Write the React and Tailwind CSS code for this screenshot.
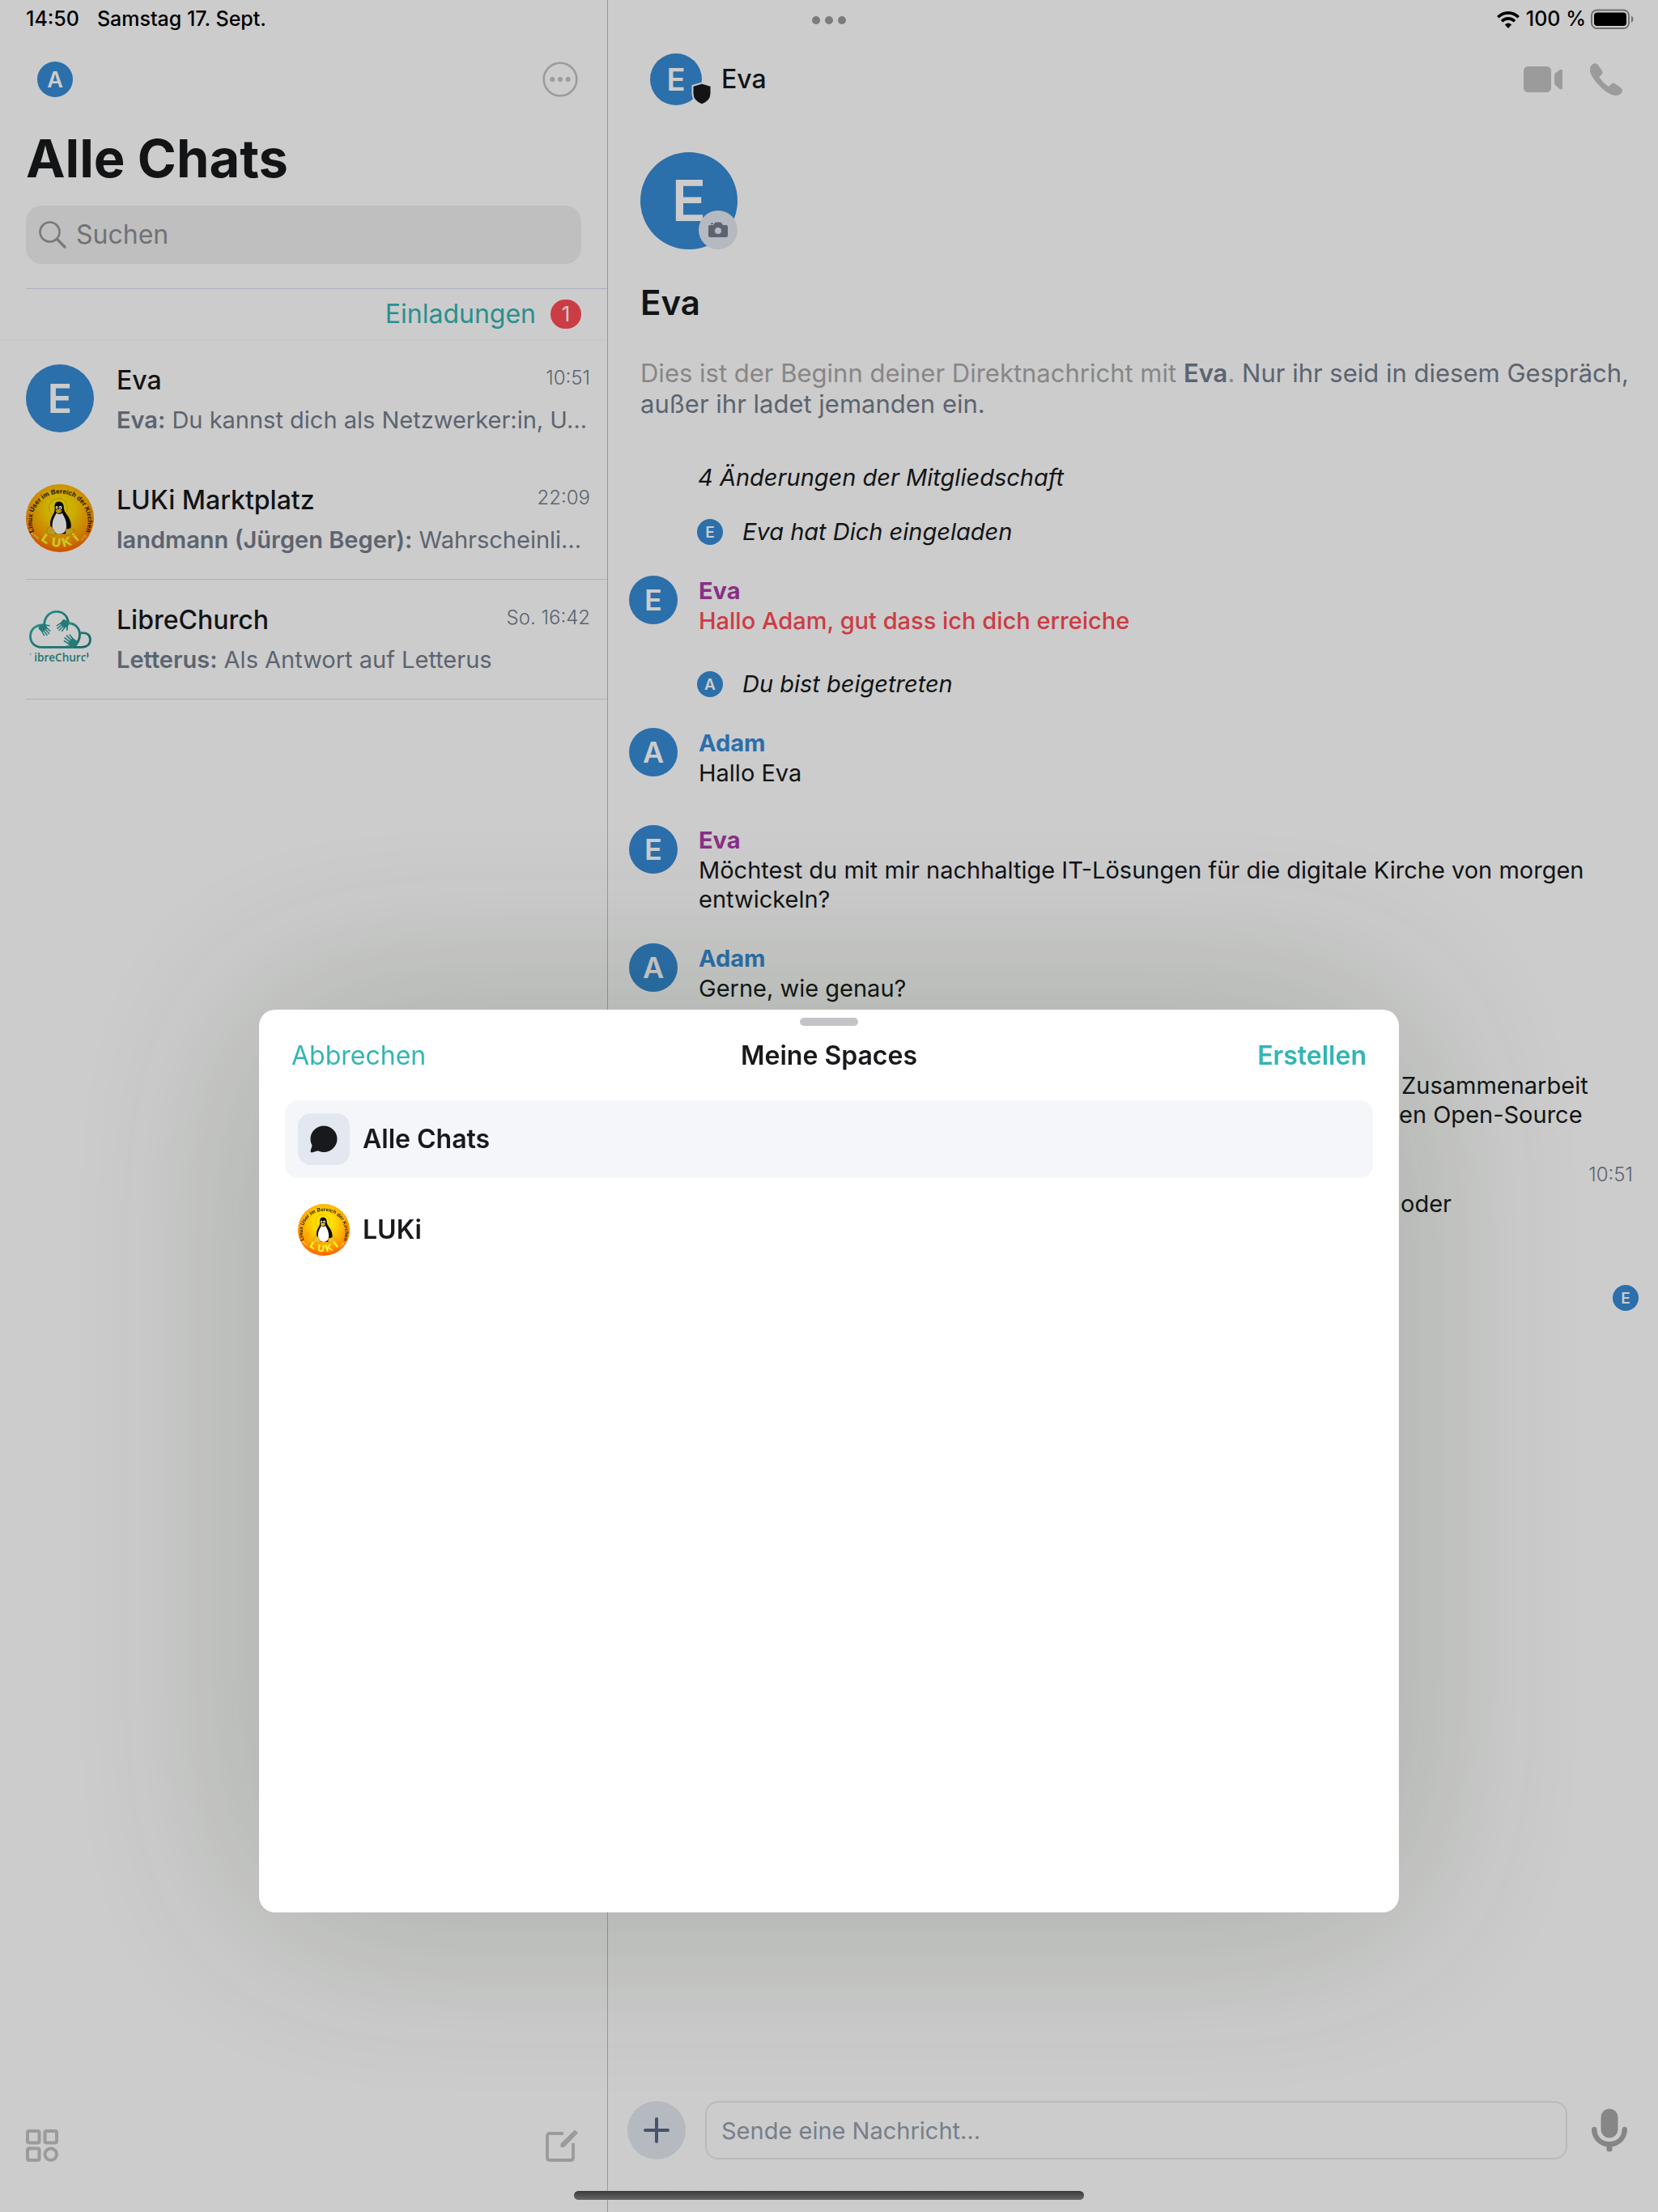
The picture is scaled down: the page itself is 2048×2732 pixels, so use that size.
import React from "react";

const AVATAR_SIZES = {
  32: "size-8 text-[19px]",
  44: "size-11 text-[27px]",
  60: "size-[60px] text-[36px]",
  64: "size-16 text-[38px]",
  84: "size-[84px] text-[50px]",
  120: "size-[120px] text-[70px]",
};

function Avatar({ letter, size }) {
  return (
    <span
      className={`flex shrink-0 items-center justify-center rounded-full bg-[#368bd6] font-semibold not-italic leading-none text-white ${AVATAR_SIZES[size]}`}
    >
      {letter}
    </span>
  );
}

const lukiLetters = [
  ["L", "12"],
  ["U", "28"],
  ["K", "42.5"],
  ["i", "57"],
];

function LukiLogo({ id, className }) {
  return (
    <svg viewBox="0 0 84 84" className={className} role="img" aria-label="LUKi">
      <defs>
        <radialGradient id={`${id}-bg`} cx="0.5" cy="0.36" r="0.62">
          <stop offset="0" stopColor="#fff000" />
          <stop offset="0.35" stopColor="#ffd800" />
          <stop offset="0.75" stopColor="#ffa000" />
          <stop offset="1" stopColor="#ff6a00" />
        </radialGradient>
        <path id={`${id}-top`} d="M9.5 57.5 A34.5 34.5 0 1 1 74.5 57.5" />
        <path id={`${id}-bottom`} d="M13.5 63 A35.5 35.5 0 0 0 70.5 63" />
        <path id={`${id}-www`} d="M6 61 L20 73" />
        <path id={`${id}-org`} d="M69 71 L79 58" />
      </defs>
      <circle cx="42" cy="42" r="42" fill={`url(#${id}-bg)`} />
      <text fontFamily="Liberation Sans" fontWeight="700" fontSize="8.2" fill="#1c1400">
        <textPath href={`#${id}-top`} startOffset="50%" textAnchor="middle">
          Linux User im Bereich der Kirchen
        </textPath>
      </text>
      {lukiLetters.map(([ch, offset]) => (
        <text
          key={ch}
          fontFamily="Liberation Sans"
          fontWeight="700"
          fontSize="15"
          fill="#fff833"
          stroke="#fff833"
          strokeWidth="0.6"
        >
          <textPath href={`#${id}-bottom`} startOffset={offset} textAnchor="middle">
            {ch}
          </textPath>
        </text>
      ))}
      <text fontFamily="Liberation Sans" fontWeight="700" fontSize="5" fill="#ffd84a">
        <textPath href={`#${id}-www`}>www.</textPath>
      </text>
      <text fontFamily="Liberation Sans" fontWeight="700" fontSize="5" fill="#ffd84a">
        <textPath href={`#${id}-org`}>.org</textPath>
      </text>
      <circle cx="40" cy="29" r="11.5" fill="none" stroke="#e2b400" strokeWidth="1" />
      <path
        d="M40.500 21.500 C36.500 21.500 35.200 24.500 35.600 28.500 C36 33 34.500 36 32 40.500 C29.500 45.500 29.500 51 31.500 55.500 L34 61 L49 61.500 L55.500 55.500 C57 47 53.500 41 49.500 36 C46.500 32 47.200 29 46.500 26 C45.700 23 43.700 21.500 40.500 21.500 Z"
        fill="#0c0c0c"
      />
      <path
        d="M38 35.500 C35 40 32.500 45 32.500 50.500 C32.500 57 35.500 61 41 61.500 C47 61.500 50.500 57.500 50 51 C50 45 47.500 40 44.500 35.500 C42.500 37.500 40 37.500 38 35.500 Z"
        fill="#fff"
      />
      <ellipse cx="38.300" cy="29" rx="1.600" ry="2.100" fill="#fff" />
      <ellipse cx="42.600" cy="29" rx="1.900" ry="2.200" fill="#fff" />
      <circle cx="38.700" cy="29.400" r="0.700" fill="#000" />
      <circle cx="42.300" cy="29.400" r="0.800" fill="#000" />
      <path d="M36.500 32.500 C38.500 30.500 42 30.500 44.500 32.500 C43.500 35 41.500 36.200 40 36 C38.500 35.800 37 34.500 36.500 32.500 Z" fill="#f2b400" />
      <path d="M27.500 53 C29.500 51 31.500 52 33 54.500 L36.500 60 C37.500 62 35.500 63.300 32.500 62.800 L26 61.500 C24 60.800 26 59 26 57 Z" fill="#eec02a" stroke="#a67c00" strokeWidth="0.500" />
      <path d="M49.500 54.500 C51 56 54 55.500 55.500 53.500 C57 55.500 58.500 56.500 60 57.500 C60.500 58.500 56.500 60.500 53.500 62.500 C51.500 63.500 49 63 49 60.500 Z" fill="#eec02a" stroke="#a67c00" strokeWidth="0.500" />
    </svg>
  );
}

function Hand({ transform }) {
  return (
    <g transform={transform} fill="none" stroke="#2c9c98" strokeLinecap="round">
      <path d="M-5 -3 C-4 -6 4 -6 5 -3 L4.200 3 L-4.200 3 Z" fill="#2c9c98" stroke="none" />
      <path d="M-3.600 2 L-4.600 7.500 M-1.200 2 L-1.600 9.500 M1.200 2 L1.600 9.500 M3.500 1.500 L4.600 7.500" strokeWidth="1.500" />
      <path d="M4.500 -1.500 L7.800 2" strokeWidth="1.700" />
    </g>
  );
}

function LibreChurchLogo({ className }) {
  return (
    <svg viewBox="0 0 84 84" className={className} role="img" aria-label="LibreChurch">
      <defs>
        <linearGradient id="lc-stroke" x1="0" y1="0" x2="1" y2="1">
          <stop offset="0" stopColor="#34b2ae" />
          <stop offset="1" stopColor="#1c7f7c" />
        </linearGradient>
        <clipPath id="lc-clip">
          <circle cx="42" cy="42" r="42" />
        </clipPath>
      </defs>
      <g transform="translate(0 1.800)" fill="none" stroke="url(#lc-stroke)" strokeWidth="2.800">
        <path d="M22.500 23.500 C23 14 29.500 7.500 38 7.500 C45.500 7.500 51 12.500 52.500 21" />
        <path d="M25 24.500 C13 22 5.500 29.500 5.500 38 C5.500 46 11 51.500 19 51.500 H69 C76 51.500 79.500 47.500 79.500 42 C79.500 36 74.500 33 67.500 34" />
        <path d="M51.500 22 C61 21.500 66.500 28.500 66.500 36 C66.500 42.500 63.500 47 60 50.500" />
      </g>
      <Hand transform="translate(21.500 30) rotate(-38)" />
      <Hand transform="translate(47 25) rotate(48)" />
      <Hand transform="translate(57 47.500) rotate(132) scale(1.100)" />
      <g clipPath="url(#lc-clip)">
        <text x="3" y="71" fontFamily="Open Sans" fontWeight="600" fontSize="13.5" fill="#2a9490">
          LibreChurch
        </text>
      </g>
    </svg>
  );
}

const chats = [
  {
    name: "Eva",
    time: "10:51",
    sender: "Eva:",
    text: "Du kannst dich als Netzwerker:in, U…",
    icon: <Avatar letter="E" size={84} />,
    line: false,
  },
  {
    name: "LUKi Marktplatz",
    time: "22:09",
    sender: "landmann (Jürgen Beger):",
    text: "Wahrscheinli…",
    icon: <LukiLogo id="luki-list" className="size-[84px] shrink-0" />,
    line: true,
  },
  {
    name: "LibreChurch",
    time: "So. 16:42",
    sender: "Letterus:",
    text: "Als Antwort auf Letterus",
    icon: <LibreChurchLogo className="size-[84px] shrink-0" />,
    line: true,
  },
];

function Sidebar() {
  return (
    <aside className="flex w-[751px] shrink-0 flex-col border-r border-[#bfbfbf]">
      <div className="flex h-12 items-center gap-[22px] pl-8 text-[25px] font-medium text-black">
        <time>14:50</time>
        <span>Samstag 17. Sept.</span>
      </div>
      <div className="flex h-[100px] items-center justify-between pl-[46px] pr-9">
        <button type="button" aria-label="Profil">
          <Avatar letter="A" size={44} />
        </button>
        <button type="button" aria-label="Mehr">
          <svg viewBox="0 0 44 44" className="size-11" fill="#c2c2c2">
            <circle cx="22" cy="22" r="20.300" fill="none" stroke="#c2c2c2" strokeWidth="2.600" />
            <circle cx="12.300" cy="22" r="2.900" />
            <circle cx="22" cy="22" r="2.900" />
            <circle cx="31.700" cy="22" r="2.900" />
          </svg>
        </button>
      </div>
      <h1 className="mt-2 pl-8 text-[65px] font-bold leading-[80px]">Alle Chats</h1>
      <div className="ml-8 mr-8 mt-[18px] flex h-[72px] items-center gap-3 rounded-[20px] bg-[#efefef] px-4">
        <svg viewBox="0 0 34 34" className="size-[34px] shrink-0" fill="none" stroke="#98989b" strokeWidth="2.600" strokeLinecap="round">
          <circle cx="13.500" cy="13.500" r="12" />
          <path d="M22.500 22.500 L32 32" strokeWidth="3.200" />
        </svg>
        <input
          type="search"
          aria-label="Suchen"
          placeholder="Suchen"
          className="min-w-0 flex-1 bg-transparent text-[32px] outline-none placeholder:text-[#8e8e93]"
        />
      </div>
      <div className="ml-8 mt-[30px] border-t border-[#d7dfeb]" />
      <button type="button" className="flex h-[63px] items-center justify-end gap-[18px] border-b border-[#f8f8f8] pr-8 text-[32px] text-[#33b5b5]">
        Einladungen
        <span className="flex h-9 w-[38px] items-center justify-center rounded-full bg-[#ff4b55] text-[26px] leading-none text-white">1</span>
      </button>
      <ul>
        {chats.map((c) => (
          <li key={c.name} className="flex h-[148px] pl-8">
            <a href="#chat" className="relative flex min-w-0 flex-1 gap-7 pr-[21px] pt-[30px]">
              {c.icon}
              <span className="flex min-w-0 flex-1 flex-col gap-2">
                <span className="flex justify-between">
                  <span className="text-[32px] font-medium leading-10">{c.name}</span>
                  <time className="text-[24px] font-light leading-[34px] text-[#737d8c]">{c.time}</time>
                </span>
                <span className="whitespace-nowrap text-[29px] leading-[42px] text-[#737d8c]">
                  <b className="font-semibold">{c.sender}</b> {c.text}
                </span>
              </span>
              {c.line && <span className="absolute inset-x-0 bottom-0 border-b border-[#dcdce8]" />}
            </a>
          </li>
        ))}
      </ul>
      <div className="mt-auto flex items-center justify-between pb-[62px] pl-8 pr-9">
        <button type="button" aria-label="Spaces">
          <svg viewBox="0 0 40 40" className="size-10" fill="none" stroke="#c2c2c2" strokeWidth="4">
            <rect x="2" y="2" width="14.500" height="14.500" rx="2" />
            <rect x="23.500" y="2" width="14.500" height="14.500" rx="2" />
            <rect x="2" y="23.500" width="14.500" height="14.500" rx="2" />
            <circle cx="30.750" cy="30.750" r="7.250" />
          </svg>
        </button>
        <button type="button" aria-label="Neuer Chat">
          <svg viewBox="0 0 40 40" className="size-10" fill="none" stroke="#c2c2c2" strokeWidth="3.800">
            <path d="M22 5 H5 Q2 5 2 8 V35 Q2 38 5 38 H31 Q34 38 34 35 V17" />
            <path d="M18.500 22 V17.500 L36 0.500 L40 4.500 L22.800 22 Z" fill="#c2c2c2" stroke="none" />
          </svg>
        </button>
      </div>
    </aside>
  );
}

function SystemLine({ letter, children, className }) {
  return (
    <div className={`flex h-9 items-center gap-6 pl-[110px] text-[29px] italic ${className}`}>
      <Avatar letter={letter} size={32} />
      <span>{children}</span>
    </div>
  );
}

function Message({ letter, name, nameClass, textClass = "", className, children }) {
  return (
    <div className={`flex gap-[26px] pl-[26px] ${className}`}>
      <Avatar letter={letter} size={60} />
      <div className="min-w-0 flex-1 pr-16">
        <p className={`text-[29px] font-bold leading-[38px] ${nameClass}`}>{name}</p>
        <p className={`text-[29px] leading-9 ${textClass}`}>{children}</p>
      </div>
    </div>
  );
}

function StatusIcons() {
  return (
    <div className="flex h-12 items-center justify-end gap-1.5 pr-[30px] text-[25px] font-medium text-black">
      <svg viewBox="0 0 28 21" className="h-[21px] w-7" fill="none" stroke="#000" strokeWidth="3.600">
        <path d="M1.300 7.300 C8.300 0 19.700 0 26.700 7.300" />
        <path d="M6 12.200 C10.500 7.700 17.500 7.700 22 12.200" />
        <path d="M9.900 16.400 Q14 12.800 18.100 16.400 L14 21 Z" fill="#000" stroke="none" />
      </svg>
      <span className="pl-0.5">100 %</span>
      <svg viewBox="0 0 53 26" className="h-[26px] w-[53px]">
        <rect x="1" y="1.500" width="46" height="22.500" rx="6.500" fill="none" stroke="#8c8c8c" strokeWidth="2" />
        <rect x="4" y="4.500" width="40" height="16.500" rx="4" fill="#000" />
        <path d="M50 8.500 C53.300 10 53.300 15.500 50 17 Z" fill="#8c8c8c" />
      </svg>
    </div>
  );
}

function Room() {
  return (
    <main className="flex min-w-0 flex-1 flex-col">
      <StatusIcons />
      <header className="flex h-[100px] items-center pl-[52px] pr-11">
        <span className="relative">
          <Avatar letter="E" size={64} />
          <svg viewBox="0 0 28 30" className="absolute -bottom-px -right-[14px] h-[30px] w-7">
            <path d="M14 1.500 L25.500 5 V14.500 C25.500 21 20.500 26 14 28.500 C7.500 26 2.500 21 2.500 14.500 V5 Z" fill="#17191c" stroke="#fff" strokeWidth="2" />
          </svg>
        </span>
        <h2 className="pl-6 text-[32px] font-medium">Eva</h2>
        <button type="button" aria-label="Videoanruf" className="ml-auto">
          <svg viewBox="0 0 48 32" className="h-8 w-12" fill="#c2c2c2">
            <rect width="34" height="32" rx="5.500" />
            <path d="M38 11.500 C38 10 38.500 9 39.500 8 L44.500 4.300 C46.500 3 48 3.800 48 5.800 V26.200 C48 28.200 46.500 29 44.500 27.700 L39.500 23.500 C38.500 22.500 38 21.700 38 20.200 Z" />
          </svg>
        </button>
        <button type="button" aria-label="Anruf" className="ml-[34px]">
          <svg viewBox="0 0 40 40" className="size-10" fill="#c2c2c2">
            <path d="M3.500 1.200 C5.800 -0.300 8 -0.200 9.800 2 L14.800 9.300 C16.200 11.800 15.600 13.300 13.800 14.800 L12.200 16.100 C11.400 16.800 11.500 17.300 12 18.100 C14.500 22 18.500 26 22.300 28.300 C23.200 28.800 23.700 28.700 24.300 28 L26.200 26 C27.700 24.400 29.300 24.400 31 25.400 L38 30.300 C40.300 32 40.500 34.200 39.200 36.300 C37.500 39 34.500 40.300 31 40 C25 39.300 17.500 34.500 10.500 26.800 C4 19.600 0 13.500 0 8 C0 5 1.300 2.700 3.500 1.200 Z" />
          </svg>
        </button>
      </header>

      <section className="pl-10 pr-4 pt-10">
        <span className="relative inline-flex align-top">
          <Avatar letter="E" size={120} />
          <button type="button" aria-label="Bild ändern" className="absolute bottom-0 right-0 flex size-12 items-center justify-center rounded-full bg-[#e3e8f0]">
            <svg viewBox="0 0 24 20" className="h-5 w-6">
              <path d="M2 4 H6 L8 1.200 Q8.500 0.500 9.500 0.500 H14.500 Q15.500 0.500 16 1.200 L18 4 H22 Q24 4 24 6 V17 Q24 19 22 19 H2 Q0 19 0 17 V6 Q0 4 2 4 Z M3 1.500 H6 V3 H3 Z" fill="#737d8c" />
              <circle cx="12" cy="11" r="4" fill="#e3e8f0" />
            </svg>
          </button>
        </span>
        <h3 className="mt-[38px] text-[42px] font-semibold leading-[56px]">Eva</h3>
        <p className="mt-10 text-[31px] leading-[38px] text-[#737d8c]">
          <span className="text-[#a9a9a9]">Dies ist der Beginn deiner Direktnachricht mit </span>
          <b className="font-semibold">Eva</b>
          <span className="text-[#a9a9a9]">.</span> Nur ihr seid in diesem Gespräch, außer ihr ladet jemanden ein.
        </p>
      </section>

      <p className="mt-[54px] pl-[111px] text-[29px] italic leading-9">4 Änderungen der Mitgliedschaft</p>
      <SystemLine letter="E" className="mt-[31px]">Eva hat Dich eingeladen</SystemLine>
      <Message letter="E" name="Eva" nameClass="text-[#ac3ba8]" textClass="font-medium text-[#ff4b55]" className="mt-9">
        Hallo Adam, gut dass ich dich erreiche
      </Message>
      <SystemLine letter="A" className="mt-[42px]">Du bist beigetreten</SystemLine>
      <Message letter="A" name="Adam" nameClass="text-[#368bd6]" className="mt-9">
        Hallo Eva
      </Message>
      <Message letter="E" name="Eva" nameClass="text-[#ac3ba8]" className="mt-[46px]">
        Möchtest du mit mir nachhaltige IT-Lösungen für die digitale Kirche von morgen
        <br />
        entwickeln?
      </Message>
      <Message letter="A" name="Adam" nameClass="text-[#368bd6]" className="mt-9">
        Gerne, wie genau?
      </Message>
      <div className="ml-auto mt-[84px] w-[320px] text-[29px] leading-9">
        <p className="pl-[3px]">Zusammenarbeit</p>
        <p>en Open-Source</p>
        <p className="mt-[38px] pr-[31px] text-right text-[24px] font-light leading-9 text-[#737d8c]">10:51</p>
        <p className="pl-0.5">oder</p>
      </div>
      <div className="mt-[82px] flex justify-end pr-6">
        <Avatar letter="E" size={32} />
      </div>

      <form className="mt-auto flex items-center pb-[65px] pl-6 pr-[38px]" onSubmit={(e) => e.preventDefault()}>
        <button type="button" aria-label="Hinzufügen" className="flex size-[72px] shrink-0 items-center justify-center rounded-full bg-[#e3e8f0]">
          <svg viewBox="0 0 32 32" className="size-8" stroke="#586a85" strokeWidth="4" strokeLinecap="round">
            <path d="M16 2 V30 M2 16 H30" />
          </svg>
        </button>
        <input
          type="text"
          aria-label="Nachricht"
          placeholder="Sende eine Nachricht…"
          className="ml-6 h-[72px] min-w-0 flex-1 rounded-2xl border-2 border-[#e9e9e9] px-[18px] text-[29px] outline-none placeholder:text-[#949fae]"
        />
        <button type="button" aria-label="Sprachnachricht" className="ml-[30px]">
          <svg viewBox="0 0 44 54" className="h-[54px] w-11" fill="#a8a8a8">
            <rect x="11.500" y="0.500" width="21" height="36" rx="10.500" />
            <path d="M0 26 C0 21.500 6.500 21.500 6.500 26 C6.500 35 13 41 22 41 C31 41 37.500 35 37.500 26 C37.500 21.500 44 21.500 44 26 C44 37 36 45.500 25.500 47.500 V51 Q25.500 53.500 22 53.500 Q18.500 53.500 18.500 51 V47.500 C8 45.500 0 37 0 26 Z" />
          </svg>
        </button>
      </form>
    </main>
  );
}

function SpacesSheet() {
  return (
    <div className="fixed inset-0 flex items-end justify-center bg-black/20 pb-[370px]">
      <div
        role="dialog"
        aria-labelledby="sheet-title"
        className="flex min-h-[1115px] w-[1408px] max-w-full flex-col rounded-[20px] bg-white px-8 pt-2.5 shadow-[0_0_270px_rgba(20,45,0,0.22)]"
      >
        <div className="h-2.5 w-[72px] self-center rounded-full bg-[#c4c4c7]" />
        <div className="mt-[13px] grid h-10 grid-cols-3 items-center px-2 text-[32px]">
          <button type="button" className="justify-self-start text-[#33b5b5]">Abbrechen</button>
          <h2 id="sheet-title" className="text-center font-semibold">Meine Spaces</h2>
          <button type="button" className="justify-self-end font-semibold text-[#33b5b5]">Erstellen</button>
        </div>
        <ul className="mt-[39px] flex flex-col gap-4 text-[32px] font-semibold">
          <li>
            <button type="button" className="flex h-24 w-full items-center gap-4 rounded-2xl bg-[#f4f6fa] px-4">
              <span className="flex size-16 items-center justify-center rounded-2xl bg-[#e3e8f0]">
                <svg viewBox="0 0 34 34" className="size-[34px]">
                  <path d="M17 0.500 C26 0.500 33.500 7.700 33.500 16.700 C33.500 25.700 26 33 17 33 C14.500 33 12 32.300 9.800 31.200 L3 33.300 C1.200 33.800 0.200 32.800 0.700 31 L2.600 24.700 C1.300 22.300 0.500 19.600 0.500 16.700 C0.500 7.700 8 0.500 17 0.500 Z" fill="#17191c" />
                </svg>
              </span>
              Alle Chats
            </button>
          </li>
          <li>
            <button type="button" className="flex h-24 w-full items-center gap-4 rounded-2xl px-4">
              <LukiLogo id="luki-space" className="size-16" />
              LUKi
            </button>
          </li>
        </ul>
      </div>
    </div>
  );
}

export default function App() {
  return (
    <div className="relative flex min-h-screen bg-white font-['Inter',sans-serif] text-[#17191c]">
      <Sidebar />
      <Room />
      <div className="absolute left-1/2 top-5 flex -translate-x-1/2 gap-1.5">
        <span className="size-2.5 rounded-full bg-[#9b9b9b]" />
        <span className="size-2.5 rounded-full bg-[#9b9b9b]" />
        <span className="size-2.5 rounded-full bg-[#9b9b9b]" />
      </div>
      <SpacesSheet />
      <div className="fixed bottom-[15px] left-1/2 h-[11px] w-[630px] -translate-x-1/2 rounded-full bg-linear-to-b from-[#3a3a3a] to-[#686868]" />
    </div>
  );
}
